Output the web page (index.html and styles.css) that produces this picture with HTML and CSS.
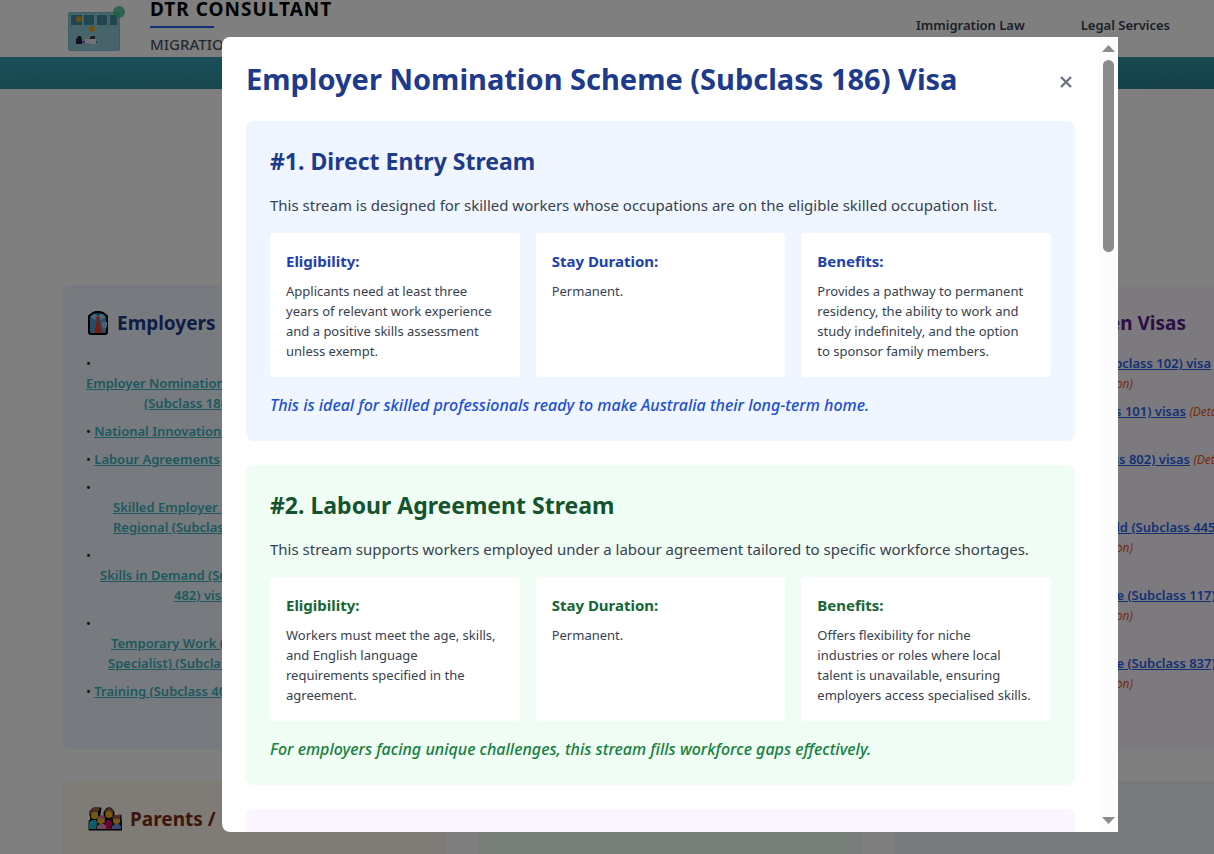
FILE: index.html
```html
<!DOCTYPE html>
<html lang="en">
<head>
<meta charset="utf-8">
<title>DTR Consultant</title>
<link rel="stylesheet" href="styles.css">
</head>
<body>
<div class="page">
  <header class="site-header">
    <div class="brand">
      <svg class="logo" viewBox="0 0 58 46" aria-hidden="true">
        <rect x="0.5" y="6.500" width="51" height="38" rx="1.500" fill="#8cc8d2" stroke="#7bbcc8"/>
        <g fill="#408f9c"><rect x="3" y="9" width="11" height="10"/><rect x="16" y="9" width="10" height="10"/><rect x="29" y="9" width="10" height="10"/><rect x="42" y="9" width="7" height="10"/></g>
        <circle cx="51" cy="6" r="6" fill="#38b788" fill-opacity=".8"/>
        <circle cx="11" cy="13" r="2.700" fill="#f59e0b"/><circle cx="24" cy="23" r="2.700" fill="#f59e0b"/>
        <path d="M8 38v-5l2-2v-1h3v1l1 2v5z" fill="#1f2937"/><path d="M22 33v-2l2-1h3v3z" fill="#374151"/>
        <path d="M14 35h15v2H14z" fill="#8b4fd8"/><path d="M17 33h5v4h-5zM22 33h6v5h-6z" fill="#e5e7eb"/>
      </svg>
      <div class="brand-text">
        <span class="brand-name">DTR CONSULTANT</span>
        <span class="brand-rule"></span>
        <span class="brand-sub">MIGRATION</span>
      </div>
    </div>
    <nav class="nav"><a href="#law">Immigration Law</a><a href="#legal">Legal Services</a></nav>
  </header>
  <div class="band"></div>
  <main class="cards">
    <section class="card card-blue">
      <h2>
        <svg class="ic-shirt" viewBox="0 0 22 24" aria-hidden="true">
          <path d="M2 5l4-3 3-1h4l3 1 4 3v16q0 2-2 2H4q-2 0-2-2z" fill="#4a9bd4" stroke="#000" stroke-width="2" stroke-linejoin="round"/>
          <path d="M6 3l3 1h4l3-1 2 3-4 3-3-3-3 3-4-3z" fill="#92d3f5"/>
          <path d="M8 2h6l-3 3z" fill="#2b6fa8"/>
          <path d="M9 6l2-1 2 1-1 3 3 13H7l3-13z" fill="#ea3b22"/><path d="M15 11h5v5q-3 3-5 0z" fill="#92c8ee"/>
        </svg>
        Employers
      </h2>
      <ul class="visas">
        <li>•<a class="block" href="#186"><span>Employer Nomination Scheme visa</span><span class="in-58">(Subclass 186) visa</span></a></li>
        <li>• <a href="#858">National Innovation visa</a></li>
        <li>• <a href="#la">Labour Agreements</a></li>
        <li>•<a class="block" href="#494"><span class="in-27">Skilled Employer Sponsored</span><span class="in-27">Regional (Subclass 494) visa</span></a></li>
        <li>•<a class="block" href="#482"><span class="in-14">Skills in Demand (Subclass</span><span class="in-88">482) visa</span></a></li>
        <li>•<a class="block" href="#400"><span class="in-25">Temporary Work (Short Stay</span><span class="in-22">Specialist) (Subclass 400)</span></a></li>
        <li>• <a href="#407">Training (Subclass 407) visa</a></li>
      </ul>
    </section>
    <section class="card card-green"></section>
    <section class="card card-purple">
      <h2><span class="to-268">Children Visas</span></h2>
      <ul class="visas kids">
        <li><a class="to-293" href="#102">Adoption (Subclass 102) visa</a><br><i class="to-215">(Detailed information)</i></li>
        <li><a class="to-268" href="#101">Child (Subclass 101) visas</a> <i>(Detailed</i><br><i>information)</i></li>
        <li><a class="to-272" href="#802">Child (Subclass 802) visas</a> <i>(Detailed</i><br><i>information)</i></li>
        <li>•<br><a href="#445"><span class="to-210">Dependent Child</span> (Subclass 445) visa</a><br><i class="to-215">(Detailed information)</i></li>
        <li>•<br><a href="#117"><span class="to-206">Orphan Relative</span> (Subclass 117) visa</a><br><i class="to-215">(Detailed information)</i></li>
        <li>•<br><a href="#837"><span class="to-206">Orphan Relative</span> (Subclass 837) visa</a><br><i class="to-215">(Detailed information)</i></li>
      </ul>
    </section>
    <section class="card card-orange">
      <h2>
        <svg class="ic-family" viewBox="0 0 34 24" aria-hidden="true">
          <path d="M1 23V14l2-2-1-4V4l3-3h8l-1 6-1 3 3-1 2 2V5l3-4h4l3 4v4l7-1v5l2 4v6z" fill="#111" stroke="#000" stroke-width="1" stroke-linejoin="round"/>
          <path d="M1 22v-7l3-2h4l1 3-1 6z" fill="#1fb5cf"/><path d="M17 17l2-4h3l2 3-1 6h-5z" fill="#d60f67"/>
          <rect x="3" y="4" width="7" height="8" rx="3" fill="#f2b01e"/><path d="M2 7V4l3-3h7l-2 4H6z" fill="#9a6548"/>
          <path d="M17 10V4l3-3h3l2 3v6z" fill="#9a5a48"/><rect x="18" y="4" width="6" height="7" rx="3" fill="#f2b01e"/>
          <path d="M9 22v-3l3-2h4l2 2v3z" fill="#e58cb5"/><path d="M9 16v-6l4-2 4 2v6z" fill="#c4738a"/><rect x="10" y="11" width="6" height="6" rx="3" fill="#f2b01e"/>
          <path d="M24 22v-3l3-2h4l2 2v3z" fill="#6e8fe8"/><rect x="25" y="10" width="7" height="7" rx="3" fill="#f2b01e"/><path d="M24 12l2-4h7l-2 4z" fill="#9a6548"/>
        </svg>
        Parents / Family
      </h2>
    </section>
    <section class="card card-mint"></section>
    <section class="card card-slate"></section>
  </main>

  <div class="overlay">
    <div class="modal" role="dialog" aria-modal="true" aria-labelledby="dialog-title">
      <div class="modal-body">
        <div class="modal-head">
          <h1 id="dialog-title">Employer Nomination Scheme (Subclass 186) Visa</h1>
          <button class="close" type="button" aria-label="Close"><svg viewBox="0 0 12 12" aria-hidden="true"><path d="M1 1l10 10M11 1L1 11"/></svg></button>
        </div>
        <section class="stream stream-blue">
          <h3>#1. Direct Entry Stream</h3>
          <p class="intro">This stream is designed for skilled workers whose occupations are on the eligible skilled occupation list.</p>
          <div class="facts">
            <div class="fact"><h4>Eligibility:</h4><p>Applicants need at least three<br>years of relevant work experience<br>and a positive skills assessment<br>unless exempt.</p></div>
            <div class="fact"><h4>Stay Duration:</h4><p>Permanent.</p></div>
            <div class="fact"><h4>Benefits:</h4><p>Provides a pathway to permanent<br>residency, the ability to work and<br>study indefinitely, and the option<br>to sponsor family members.</p></div>
          </div>
          <p class="note">This is ideal for skilled professionals ready to make Australia their long-term home.</p>
        </section>
        <section class="stream stream-green">
          <h3>#2. Labour Agreement Stream</h3>
          <p class="intro">This stream supports workers employed under a labour agreement tailored to specific workforce shortages.</p>
          <div class="facts">
            <div class="fact"><h4>Eligibility:</h4><p>Workers must meet the age, skills,<br>and English language<br>requirements specified in the<br>agreement.</p></div>
            <div class="fact"><h4>Stay Duration:</h4><p>Permanent.</p></div>
            <div class="fact"><h4>Benefits:</h4><p>Offers flexibility for niche<br>industries or roles where local<br>talent is unavailable, ensuring<br>employers access specialised skills.</p></div>
          </div>
          <p class="note">For employers facing unique challenges, this stream fills workforce gaps effectively.</p>
        </section>
        <section class="stream stream-purple"></section>
      </div>
      <div class="scrollbar" aria-hidden="true">
        <svg class="arrow" viewBox="0 0 13 7"><path d="M0 7L6.500 0 13 7z"/></svg>
        <div class="track"><div class="thumb"></div></div>
        <svg class="arrow" viewBox="0 0 13 7"><path d="M0 0h13L6.500 7z"/></svg>
      </div>
    </div>
  </div>
</div>
</body>
</html>
```
FILE: styles.css
```css
* { box-sizing: border-box; margin: 0; padding: 0; }
html, body { height: 100%; overflow: hidden; }
body { font-family: "Noto Sans", "Open Sans", sans-serif; color: #1f2937; background: #fff; }
.page { position: relative; min-width: 1340px; height: 100%; overflow: hidden; }

.site-header { display: flex; justify-content: space-between; height: 57px; padding: 0 170px 0 68px; background: #fff; }
.brand { display: flex; gap: 24px; }
.logo { width: 58px; height: 46px; margin-top: 6px; }
.brand-text { display: flex; flex-direction: column; align-items: flex-start; }
.brand-name { font-size: 19px; line-height: 26px; margin-top: -4px; font-weight: 700; color: #000; letter-spacing: 1px; }
.brand-rule { flex: none; width: 64px; height: 2px; margin: 4px 0; background: #2563eb; }
.brand-sub { font-size: 15px; line-height: 24px; font-weight: 500; color: #4b5563; }
.nav { display: flex; gap: 56px; padding-top: 15px; }
.nav a { font-size: 13px; line-height: 20px; font-weight: 600; color: #374151; text-decoration: none; }
.band { height: 32px; background: linear-gradient(to bottom right, #36a2b3, #2a7f8d); }

.cards { display: grid; grid-template-columns: repeat(3, 1fr); gap: 32px; max-width: 1216px; margin: 196px auto 0; }
.card { padding: 24px; border-radius: 8px; min-height: 200px; }
.card-blue { background: #eff6ff; }
.card-green, .card-mint { background: #f0fdf4; }
.card-purple { background: #faf5ff; }
.card-orange { background: #fff7ed; }
.card-slate { background: #f1f5fd; }
.card h2 { display: flex; align-items: center; gap: 8px; margin-bottom: 16px; font-size: 19px; line-height: 28px; font-weight: 700; color: #1e3a8a; }
.card-purple h2 { color: #581c87; }
.card-orange h2 { color: #7c2d12; }
.ic-shirt { width: 22px; height: 24px; margin-left: 1px; }
.ic-family { width: 34px; height: 24px; margin-left: 2px; }
.visas { display: flex; flex-direction: column; gap: 8px; margin-bottom: 24px; list-style: none; font-size: 13px; line-height: 20px; white-space: nowrap; }
.visas a { font-weight: 600; color: #38b2bb; text-decoration: underline; }
.visas .block, .visas .block span { display: block; }
.visas .block { text-decoration: none; }
.visas .block span { text-decoration: underline; }
.in-14 { padding-left: 14px; }
.in-22 { padding-left: 22px; }
.in-25 { padding-left: 25px; }
.in-27 { padding-left: 27px; }
.in-58 { padding-left: 58px; }
.in-88 { padding-left: 88px; }
.kids a { color: #2563eb; }
.kids i { font-size: 12px; line-height: 16px; color: #ea580c; }
[class^="to-"] { display: inline-block; text-align: right; }
.kids li { line-height: 20px; }
.kids a[class^="to-"], .kids span[class^="to-"] { line-height: 20px; vertical-align: bottom; }
.visas a span[class^="to-"] { text-decoration: underline; }
.to-206 { width: 206px; }
.to-210 { width: 210px; }
.to-215 { width: 215px; }
.to-268 { width: 268px; }
.to-272 { width: 272px; }
.to-293 { width: 293px; }

.overlay { position: absolute; inset: 0; display: flex; justify-content: center; padding: 37px 16px 22px; background: rgba(0, 0, 0, .5); }
.modal { display: flex; width: 100%; max-width: 896px; background: #fff; border-radius: 8px 0 0 8px; overflow: hidden; }
.modal-body { flex: 1; padding: 24px; overflow: hidden; }
.modal-head { display: flex; justify-content: space-between; align-items: center; margin-bottom: 24px; }
.modal-head h1 { font-size: 29px; line-height: 36px; font-weight: 700; color: #1e3a8a; }
.close { display: flex; padding: 6px 3px 0; border: 0; background: none; }
.close svg { width: 12px; height: 12px; fill: none; stroke: #6b7280; stroke-width: 2.300; }
.stream { padding: 24px; margin-bottom: 24px; border-radius: 8px; }
.stream h3 { margin-bottom: 16px; font-size: 23px; line-height: 32px; font-weight: 700; }
.intro { margin-bottom: 16px; font-size: 15px; line-height: 24px; color: #374151; }
.facts { display: grid; grid-template-columns: repeat(3, 1fr); gap: 16px; margin-bottom: 16px; }
.fact { padding: 16px; border-radius: 4px; background: #fff; }
.fact h4 { margin-bottom: 8px; font-size: 15px; line-height: 24px; font-weight: 700; }
.fact p { font-size: 13px; line-height: 20px; color: #374151; white-space: nowrap; }
.note { font-size: 16px; line-height: 24px; font-weight: 500; font-style: italic; }
.stream-blue { background: #eff6ff; }
.stream-blue h3 { color: #1e3a8a; }
.stream-blue h4 { color: #1e40af; }
.stream-blue .note { color: #1d4ed8; }
.stream-green { background: #f0fdf4; }
.stream-green h3 { color: #14532d; }
.stream-green h4 { color: #166534; }
.stream-green .note { color: #15803d; }
.stream-purple { min-height: 320px; background: #faf5ff; }

.scrollbar { display: flex; flex-direction: column; align-items: center; width: 19px; padding: 8px 0; background: #fcfcfc; }
.arrow { width: 13px; height: 7px; fill: #8b8b8b; }
.track { flex: 1; padding: 8px 0; }
.thumb { width: 11px; height: 192px; border-radius: 6px; background: #8b8b8b; }
```
